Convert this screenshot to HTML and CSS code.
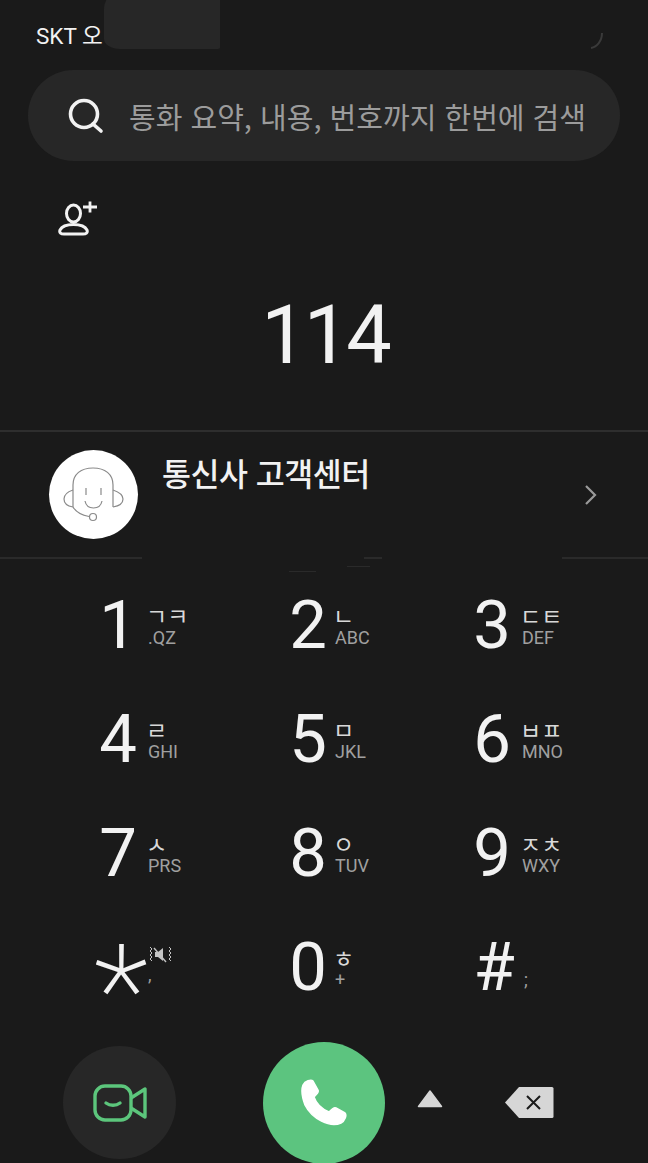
FILE: index.html
```html
<!DOCTYPE html>
<html lang="ko">
<head>
    <meta charset="UTF-8">
    <title>전화</title>
    <link rel="stylesheet" href="styles.css">
</head>
<body>
    <div class="status">
        <span class="carrier">SKT 오</span>
        <div class="smudge"></div>
        <svg class="status-arc" width="26" height="18" viewBox="0 0 26 18"><path d="M24 1c0 8-5 14-11 15" fill="none" stroke="#3a3a3a" stroke-width="2"/></svg>
    </div>

    <div class="search">
        <svg class="search-icon" width="38" height="36" viewBox="0 0 38 36"><circle cx="17" cy="16" r="13.5" fill="none" stroke="#f2f2f2" stroke-width="3.6"/><path d="M26 26l8 7" stroke="#f2f2f2" stroke-width="3.6" stroke-linecap="round"/></svg>
        <span class="search-text">통화 요약, 내용, 번호까지 한번에 검색</span>
    </div>

    <div class="add-contact">
        <svg width="42" height="38" viewBox="0 0 42 38" fill="none" stroke="#f2f2f2" stroke-width="3"><ellipse cx="15.500" cy="15.500" rx="7" ry="8.500"/><path d="M6 36c-3 0-5-1-4-4 2-4 7-5.500 13.500-5.500S27 28 29 32c1 3-1 4-4 4z"/><path d="M32 3.500v11M25 9h14" stroke-width="2.800"/></svg>
    </div>

    <div class="number">114</div>

    <div class="contact">
        <div class="avatar">
            <svg width="89" height="89" viewBox="0 0 89 89" fill="none" stroke="#8a8a8a" stroke-width="1.200"><path d="M24 57V35c0-11 8-17 20-17s20 6 20 17v22"/><path d="M24 40c-6 2-9 5-9 9s3 7 9 8M64 40c6 2 10 5 10 9s-4 7-10 8"/><path d="M36 51c1 5 4 7 8.500 7s7.500-2 8.500-7"/><path d="M37 38v7M52 38v7"/><path d="M24 57c3 5 8 8 16 9.500"/><circle cx="44" cy="67" r="3.500"/></svg>
        </div>
        <div class="contact-name">통신사 고객센터</div>
        <svg class="chevron" width="13" height="20" viewBox="0 0 13 20"><path d="M2 1l9 9-9 9" fill="none" stroke="#9a9a9a" stroke-width="2.200"/></svg>
    </div>

    <div class="keypad">
        <div class="key"><span class="digit">1</span><div class="side"><span class="kr">ㄱㅋ</span><span class="en">.QZ</span></div></div>
        <div class="key"><span class="digit">2</span><div class="side"><span class="kr">ㄴ</span><span class="en">ABC</span></div></div>
        <div class="key"><span class="digit">3</span><div class="side"><span class="kr">ㄷㅌ</span><span class="en">DEF</span></div></div>
        <div class="key"><span class="digit">4</span><div class="side"><span class="kr">ㄹ</span><span class="en">GHI</span></div></div>
        <div class="key"><span class="digit">5</span><div class="side"><span class="kr">ㅁ</span><span class="en">JKL</span></div></div>
        <div class="key"><span class="digit">6</span><div class="side"><span class="kr">ㅂㅍ</span><span class="en">MNO</span></div></div>
        <div class="key"><span class="digit">7</span><div class="side"><span class="kr">ㅅ</span><span class="en">PRS</span></div></div>
        <div class="key"><span class="digit">8</span><div class="side"><span class="kr">ㅇ</span><span class="en">TUV</span></div></div>
        <div class="key"><span class="digit">9</span><div class="side"><span class="kr">ㅈㅊ</span><span class="en">WXY</span></div></div>
        <div class="key">
            <span class="digit star">*</span>
            <div class="side side-star">
                <svg class="mute" width="24" height="18" viewBox="0 0 24 18" fill="none" stroke="#c4c4c4" stroke-width="1"><path d="M2 1l2 2-2 2 2 2-2 2 2 2-2 2 2 2"/><path d="M21 1l2 2-2 2 2 2-2 2 2 2-2 2 2 2"/><path d="M7 6h3l5-4v13l-5-4H7z" fill="#c4c4c4" stroke="none"/><path d="M6 2l12 14" stroke-width="1.400"/></svg>
                <span class="en">,</span>
            </div>
        </div>
        <div class="key"><span class="digit">0</span><div class="side"><span class="kr">ㅎ</span><span class="en">+</span></div></div>
        <div class="key hash"><span class="digit">#</span><div class="side"><span class="kr">&nbsp;</span><span class="en">;</span></div></div>
    </div>

    <div class="actions">
        <div class="video-btn">
            <svg width="54" height="38" viewBox="0 0 54 38" fill="none" stroke="#5cc67c" stroke-width="3.400" stroke-linejoin="round"><rect x="2" y="2" width="36" height="34" rx="10"/><path d="M38 14L52 5v28L38 24"/><path d="M13 19c4 3 10 3 14 0" stroke-linecap="round"/></svg>
        </div>
        <div class="call-btn">
            <svg width="48" height="48" viewBox="0 0 48 48"><path d="M3 6C5 2 11 0 13 2l5 9c1 2-1 4-4 7 2 6 8 12 15 15 3-3 5-5 7-4l9 5c2 2 0 8-4 10C30 49 12 40 5 26 2 18 1 11 3 6z" fill="#fff" stroke="#fff" stroke-width="1.500" stroke-linejoin="round"/></svg>
        </div>
        <svg class="arrow-up" width="26" height="19" viewBox="0 0 26 19"><path d="M13 2L24.500 17.500H1.500z" fill="#d6d6d6" stroke="#d6d6d6" stroke-width="1.500" stroke-linejoin="round"/></svg>
        <svg class="backspace" width="50" height="33" viewBox="0 0 50 33"><path d="M15 1h33a1.500 1.500 0 0 1 1.500 1.500v28a1.500 1.500 0 0 1-1.500 1.500H15L1 16.500z" fill="#d6d6d6"/><path d="M23 10l13 13M36 10L23 23" stroke="#1a1a1a" stroke-width="2"/></svg>
    </div>
</body>
</html>
```

FILE: styles.css
```css
html, body {
    margin: 0;
    height: 100%;
}

body {
    width: 648px;
    height: 1163px;
    overflow: hidden;
    background-color: #1a1a1a;
    color: #f2f2f2;
    font-family: Roboto, "Noto Sans CJK KR", sans-serif;
}

.status {
    position: relative;
    height: 70px;
    overflow: hidden;
}

.carrier {
    display: block;
    padding: 23px 0 0 36px;
    font-size: 22.5px;
    line-height: 26px;
}

.smudge {
    position: absolute;
    left: 104px;
    top: -22px;
    width: 116px;
    height: 71px;
    background: #272727;
    border-radius: 44% 4% 2% 14%;
}

.status-arc {
    position: absolute;
    left: 578px;
    top: 32px;
}

.search {
    display: flex;
    align-items: center;
    height: 91px;
    margin: 0 28px;
    padding-left: 39px;
    background: #272727;
    border-radius: 46px;
}

.search-icon {
    flex: none;
    margin-right: 24px;
}

.search-text {
    font-family: "Noto Sans CJK KR", sans-serif;
    font-size: 29px;
    color: #9c9c9c;
    white-space: nowrap;
}

.add-contact {
    height: 38px;
    margin-top: 37px;
    padding-left: 58px;
}

.number {
    margin-top: 50px;
    height: 100px;
    padding-left: 2px;
    font-size: 81px;
    line-height: 100px;
    font-weight: 400;
    letter-spacing: -3px;
    text-align: center;
}

.contact {
    display: flex;
    align-items: center;
    height: 129px;
    margin-top: 44px;
    padding: 0 51px 0 49px;
    background: linear-gradient(#2e2e2e, #2e2e2e) top / 100% 2px no-repeat,
        linear-gradient(90deg, #2a2a2a 142px, transparent 142px, transparent 364px, #2a2a2a 364px, #2a2a2a 382px, transparent 382px, transparent 562px, #2a2a2a 562px) bottom / 100% 2px no-repeat;
}

.avatar {
    flex: none;
    width: 89px;
    height: 89px;
    border-radius: 50%;
    background: #fff;
}

.avatar svg {
    display: block;
}

.contact-name {
    flex: 1;
    align-self: flex-start;
    margin: 20px 0 0 24px;
    font-family: "Noto Sans CJK KR", sans-serif;
    font-size: 31.500px;
    line-height: 44px;
    font-weight: 500;
    letter-spacing: -0.500px;
}

.keypad {
    display: grid;
    grid-template-columns: 190px 184px 1fr;
    grid-auto-rows: 114px;
    height: 451px;
    padding: 32px 0 0 99px;
    box-sizing: border-box;
    background: linear-gradient(#2a2a2a, #2a2a2a) 289px 12px / 27px 1px no-repeat,
        linear-gradient(#2a2a2a, #2a2a2a) 347px 7px / 23px 1px no-repeat;
}

.key {
    display: flex;
}

.hash {
    margin-left: 2px;
}

.digit {
    display: flex;
    justify-content: center;
    width: 38px;
    font-size: 67px;
    line-height: 68px;
    font-weight: 370;
}

.star {
    box-sizing: border-box;
    height: 68px;
    padding-left: 6px;
    font-size: 128px;
    line-height: 117px;
    font-weight: 200;
}

.side {
    display: flex;
    flex-direction: column;
    margin-left: 11px;
    padding-top: 12px;
}

.key:nth-child(3n+2) .side {
    margin-left: 8px;
}

.kr {
    margin-left: -2px;
    font-family: "Noto Sans CJK KR", sans-serif;
    font-size: 23px;
    line-height: 24px;
    color: #d8d8d8;
    white-space: nowrap;
}

.en {
    font-size: 18px;
    line-height: 22px;
    color: #a0a0a0;
}

.side-star {
    padding-top: 13px;
}

.mute {
    display: block;
}

.actions {
    display: flex;
    align-items: center;
    height: 121px;
    margin-top: 32px;
    padding-left: 63px;
}

.video-btn {
    display: flex;
    align-items: center;
    justify-content: center;
    flex: none;
    width: 113px;
    height: 113px;
    border-radius: 50%;
    background: #272727;
}

.call-btn {
    display: flex;
    align-items: center;
    justify-content: center;
    flex: none;
    width: 122px;
    height: 122px;
    margin-left: 87px;
    border-radius: 50%;
    background: #5cc47f;
}

.arrow-up {
    flex: none;
    margin-left: 32px;
    margin-bottom: 8px;
}

.backspace {
    flex: none;
    margin-left: 61px;
}
```
